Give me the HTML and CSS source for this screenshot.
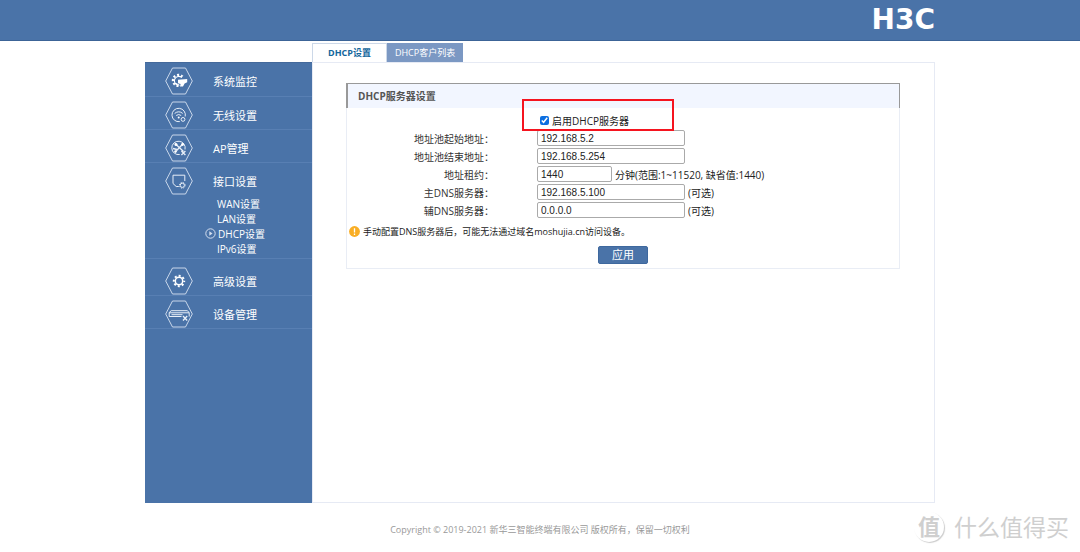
FILE: index.html
```html
<!DOCTYPE html>
<html lang="zh-CN">
<head>
<meta charset="utf-8">
<title>DHCP设置</title>
<link rel="stylesheet" href="styles.css">
</head>
<body>
<header class="topbar">
  <div class="wrap topbar-inner"><span class="logo">H3C</span></div>
</header>
<div class="wrap shell">
  <nav class="tabs">
    <a class="tab tab-active" href="#dhcp">DHCP设置</a>
    <a class="tab" href="#clients">DHCP客户列表</a>
  </nav>
  <div class="main">
    <aside class="sidebar">
      <a class="item" href="#monitor">
        <svg class="hex" viewBox="0 0 28 28"><path class="edge" d="M7.5 1h13L27.3 14l-6.8 13h-13L.7 14z"/><path d="M17.6 9.6A5.6 5.6 0 1 0 13.5 19" fill="none" stroke="#fff" stroke-width="2.2" stroke-dasharray="2 2"/><path d="M16.8 10.6A4.4 4.4 0 1 0 13.5 18.2" fill="none" stroke="#fff" stroke-width="1.1"/><path d="M13 12.7l9.2-.6v3.2l-2.6 1.2-1.6 3h-3l.6-2.6-2.6-.6z" fill="#fff"/><path d="M11 16.4l3.4 1.8" stroke="#fff"/></svg>
        <span>系统监控</span></a>
      <a class="item" href="#wireless">
        <svg class="hex" viewBox="0 0 28 28"><path class="edge" d="M7.5 1h13L27.3 14l-6.8 13h-13L.7 14z"/><g class="thin"><path d="M20.2 15.5A6.7 6.7 0 1 0 14.8 20.6M9.7 12.4q4-3.2 8 0M11.2 14.5q2.5-2 5 0"/><circle cx="18" cy="18.4" r="1.9"/></g><circle cx="13.7" cy="16.4" r="1" fill="#fff"/></svg>
        <span>无线设置</span></a>
      <a class="item" href="#ap">
        <svg class="hex" viewBox="0 0 28 28"><path class="edge" d="M7.5 1h13L27.3 14l-6.8 13h-13L.7 14z"/><g class="thin"><path d="M20 15.5A6.7 6.7 0 1 0 14.7 20.5"/><path stroke-width="1.3" d="M10 9.5l8.5 8M18 9.8l-8 8.4M8 14.5l4 1M16.4 17l4 4M20.4 17l-4 4"/></g><circle cx="11" cy="10.4" r="1.5" fill="#fff"/><circle cx="17.6" cy="10.5" r="1.4" fill="#fff"/><circle cx="10.5" cy="17.5" r="1.2" fill="#fff"/></svg>
        <span>AP管理</span></a>
      <div class="group">
        <a class="item" href="#port">
          <svg class="hex" viewBox="0 0 28 28"><path class="edge" d="M7.5 1h13L27.3 14l-6.8 13h-13L.7 14z"/><g class="thin"><path d="M19.8 14V8.2H8v8.3l3.2 3h2.6"/><circle cx="17.3" cy="18.3" r="2.1"/><circle cx="17.3" cy="18.3" r="2.9" stroke-dasharray="1.1 1.2"/></g></svg>
          <span>接口设置</span></a>
        <ul class="sub">
          <li><a href="#wan">WAN设置</a></li>
          <li><a href="#lan">LAN设置</a></li>
          <li class="current"><svg class="play" viewBox="0 0 11 11"><circle cx="5.5" cy="5.5" r="4.7" fill="none" stroke="#d4dfef"/><path d="M4.3 3.2v4.6l3.2-2.3z" fill="#d4dfef"/></svg><a href="#dhcp">DHCP设置</a></li>
          <li><a href="#ipv6">IPv6设置</a></li>
        </ul>
      </div>
      <a class="item" href="#advanced">
        <svg class="hex" viewBox="0 0 28 28"><path class="edge" d="M7.5 1h13L27.3 14l-6.8 13h-13L.7 14z"/><circle cx="14" cy="14" r="3.7" fill="none" stroke="#fff" stroke-width="1.5"/><circle cx="14" cy="14" r="5.2" fill="none" stroke="#fff" stroke-width="2" stroke-dasharray="2 2.084" stroke-dashoffset="1"/></svg>
        <span>高级设置</span></a>
      <a class="item" href="#device">
        <svg class="hex" viewBox="0 0 28 28"><path class="edge" d="M7.5 1h13L27.3 14l-6.8 13h-13L.7 14z"/><g class="thin"><path d="M16.5 16.5H4.2v-4l2-1.8h16l2 1.8v4M4.2 12.8h20M6.5 14.7h11"/><path stroke-width="1.4" d="M18 16l4.2 4.4M22.2 16L18 20.4"/></g></svg>
        <span>设备管理</span></a>
    </aside>
    <main class="content">
      <form class="panel">
        <h1 class="panel-title">DHCP服务器设置</h1>
        <div class="rows">
          <div class="row enable">
            <div class="field"><input class="check" type="checkbox" id="enable" checked><label for="enable">启用DHCP服务器</label></div>
            <div class="highlight"></div>
          </div>
          <div class="row"><label class="name" for="start">地址池起始地址：</label><div class="field"><input class="text" id="start" type="text" value="192.168.5.2"></div></div>
          <div class="row"><label class="name" for="end">地址池结束地址：</label><div class="field"><input class="text" id="end" type="text" value="192.168.5.254"></div></div>
          <div class="row"><label class="name" for="lease">地址租约：</label><div class="field"><input class="text short" id="lease" type="text" value="1440"><span>分钟(范围:1~11520, 缺省值:1440)</span></div></div>
          <div class="row"><label class="name" for="dns1">主DNS服务器：</label><div class="field"><input class="text" id="dns1" type="text" value="192.168.5.100"><span>(可选)</span></div></div>
          <div class="row"><label class="name" for="dns2">辅DNS服务器：</label><div class="field"><input class="text" id="dns2" type="text" value="0.0.0.0"><span>(可选)</span></div></div>
        </div>
        <p class="note"><svg class="warn" viewBox="0 0 11 11"><circle cx="5.5" cy="5.5" r="5.4" fill="#f9ae25"/><path d="M5.5 2.2v4.2M5.5 7.6v1.3" stroke="#fff" stroke-width="1.3"/></svg><span>手动配置DNS服务器后，可能无法通过域名moshujia.cn访问设备。</span></p>
        <div class="actions"><button class="apply" type="button">应用</button></div>
      </form>
    </main>
  </div>
</div>
<footer class="footer">Copyright © 2019-2021 新华三智能终端有限公司 版权所有，保留一切权利</footer>
<div class="watermark"><span class="seal">值</span><span>什么值得买</span></div>
</body>
</html>
```
FILE: styles.css
```css
* { box-sizing: border-box; }
body {
  margin: 0;
  position: relative;
  min-height: 100vh;
  background: #fff;
  color: #333;
  font-family: "Open Sans", "Noto Sans CJK SC", sans-serif;
  font-size: 10px;
}
a { color: inherit; text-decoration: none; }
.wrap { max-width: 790px; margin: 0 auto; }
.topbar { background: #4a73a8; border-bottom: 1px solid #3c6497; }
.topbar-inner {
  height: 40px;
  display: flex;
  align-items: center;
  justify-content: flex-end;
}
.logo {
  color: #fff;
  font: bold 28px/40px "DejaVu Sans", sans-serif;
}
.tabs { display: flex; margin: 2px 0 0 167px; height: 19px; }
.tab {
  padding: 0 8px;
  line-height: 19px;
  background: #7b98c3;
  color: #fff;
  font-size: 9px;
}
.tab-active {
  padding: 0 15px;
  border: 1px solid #ccd8e8;
  border-bottom: 0;
  line-height: 18px;
  background: #fff;
  color: #13669c;
  font-weight: bold;
}
.main { display: flex; min-height: 441px; }
.sidebar {
  flex: 0 0 167px;
  background: #4a73a8;
  color: #fff;
  border-top: 1px solid #44699b;
}
.item {
  display: flex;
  align-items: center;
  gap: 20px;
  height: 33px;
  padding: 3px 0 0 20px;
  border-bottom: 1px solid #587fb3;
  font-size: 11px;
}
.sidebar > .item:first-child { height: 34px; }
.hex { width: 28px; height: 28px; flex: none; }
.edge { fill: none; stroke: #c9d7ea; stroke-width: 1; }
.thin { fill: none; stroke: #e8eff8; stroke-width: 1; }
.group { border-bottom: 1px solid #587fb3; padding-bottom: 2px; margin-bottom: 4px; }
.group .item { border: 0; }
.sub { list-style: none; margin: 0; padding: 0 0 0 60px; }
.sub li {
  display: flex;
  align-items: center;
  height: 15px;
  padding-left: 12px;
}
.sub .current { padding-left: 0; gap: 2px; }
.play { width: 11px; height: 11px; }
.content {
  flex: 1;
  padding: 20px 34px 20px 33px;
  border: 1px solid #e6eaf4;
}
.panel { border: 1px solid #e9edf5; border-top: 0; }
.panel-title {
  margin: 0 -1px;
  height: 25px;
  padding-left: 10px;
  border: 1px solid #999;
  border-width: 1px 1px 0 2px;
  background: #f2f6ff;
  color: #555;
  font-size: 10px;
  line-height: 25px;
}
.rows { padding-top: 3px; }
.row {
  position: relative;
  display: grid;
  grid-template-columns: 147px 1fr;
  column-gap: 43px;
  align-items: center;
  height: 18px;
}
.name { text-align: right; white-space: nowrap; }
.field { grid-column: 2; display: flex; align-items: center; gap: 3px; color: #222; }
.enable { z-index: 1; }
.enable .field { padding-left: 3px; }
.check { width: 9px; height: 9px; margin: 0; accent-color: #0d6fe0; }
.text {
  width: 148px;
  height: 16px;
  padding: 0 3px;
  border: 1px solid #aaa;
  border-radius: 2px;
  color: #222;
  background: #fff;
  font: 10px "Liberation Sans", Arial, sans-serif;
}
.short { width: 75px; }
.highlight {
  position: absolute;
  left: 175px;
  top: -12px;
  width: 152px;
  height: 32px;
  border: 2px solid #f5141f;
  pointer-events: none;
}
.note {
  display: flex;
  align-items: center;
  gap: 3px;
  margin: 2px 0 0;
  padding-left: 2px;
  height: 20px;
  color: #222;
  font-size: 9px;
}
.warn { width: 11px; height: 11px; }
.actions { display: flex; justify-content: center; padding: 5px 0 4px; }
.apply {
  width: 50px;
  height: 18px;
  padding: 0;
  border: 1px solid #3e689e;
  border-radius: 2px;
  background: #4a73a8;
  color: #fff;
  font: 11px/16px "Open Sans", "Noto Sans CJK SC", sans-serif;
}
.footer {
  padding-top: 20px;
  text-align: center;
  color: #999;
  font-size: 9px;
}
.watermark {
  position: absolute;
  right: 11px;
  bottom: 8px;
  display: flex;
  align-items: center;
  gap: 10px;
  color: #cfcfcf;
  font-size: 23px;
  line-height: 34px;
}
.seal {
  width: 30px;
  height: 30px;
  border-radius: 50%;
  box-shadow: 1px 1px 1px #ccc;
  font-size: 22px;
  font-weight: bold;
  line-height: 28px;
  text-align: center;
}
```
